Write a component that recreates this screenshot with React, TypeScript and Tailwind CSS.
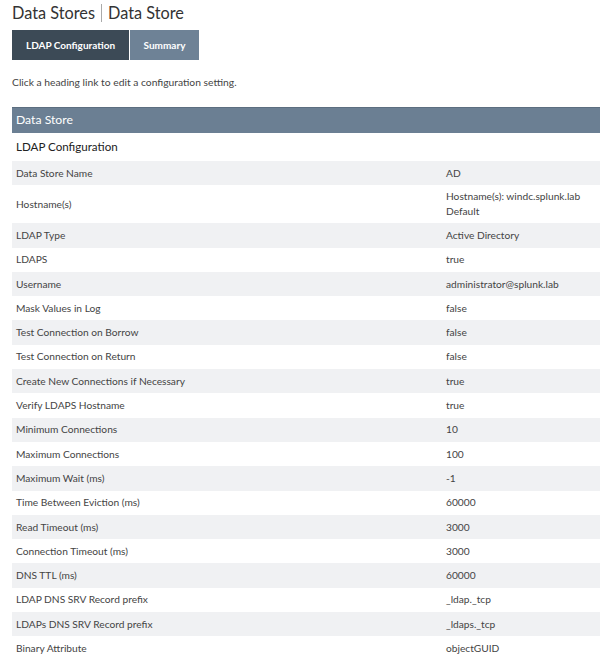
import React from "react";

const rows: [string, string[]][] = [
  ["Data Store Name", ["AD"]],
  ["Hostname(s)", ["Hostname(s): windc.splunk.lab", "Default"]],
  ["LDAP Type", ["Active Directory"]],
  ["LDAPS", ["true"]],
  ["Username", ["administrator@splunk.lab"]],
  ["Mask Values in Log", ["false"]],
  ["Test Connection on Borrow", ["false"]],
  ["Test Connection on Return", ["false"]],
  ["Create New Connections if Necessary", ["true"]],
  ["Verify LDAPS Hostname", ["true"]],
  ["Minimum Connections", ["10"]],
  ["Maximum Connections", ["100"]],
  ["Maximum Wait (ms)", ["-1"]],
  ["Time Between Eviction (ms)", ["60000"]],
  ["Read Timeout (ms)", ["3000"]],
  ["Connection Timeout (ms)", ["3000"]],
  ["DNS TTL (ms)", ["60000"]],
  ["LDAP DNS SRV Record prefix", ["_ldap._tcp"]],
  ["LDAPs DNS SRV Record prefix", ["_ldaps._tcp"]],
  ["Binary Attribute", ["objectGUID"]],
];

export default function App() {
  return (
    <div
      className="w-[600px] h-[670px] overflow-hidden bg-white text-[#333]"
      style={{ fontFamily: "Lato, 'Open Sans', sans-serif" }}
    >
      <div className="pl-[12px]">
        <h1 className="h-[30px] text-[16.3px] leading-[22px] text-[#333] flex items-center gap-[6px] font-normal pb-[4px]">
          <span>Data Stores</span>
          <span className="w-px h-[18px] bg-[#aaa]" />
          <span>Data Store</span>
        </h1>
        <div className="flex gap-px h-[30px]">
          <div className="w-[117px] bg-[#3c4a56] text-white text-[10px] font-bold flex items-center justify-center">
            LDAP Configuration
          </div>
          <div className="w-[69px] bg-[#6e8296] text-white text-[10px] font-bold flex items-center justify-center">
            Summary
          </div>
        </div>
        <p className="mt-[15px] text-[10.3px] leading-[14px] text-[#444]">
          Click a heading link to edit a configuration setting.
        </p>
        <div className="mt-[18px]">
          <div className="h-[26px] bg-[#6b7f93] border-t border-[#5c6e80] text-white text-[12.2px] flex items-center pl-[4px]">
            Data Store
          </div>
          <div className="h-[28px] text-[11.6px] text-[#222] flex items-center pl-[4px]">
            LDAP Configuration
          </div>
          {rows.map(([label, vals], i) => (
            <div
              key={label}
              className={`flex text-[10.2px] leading-[15px] text-[#444] ${
                i % 2 === 0 ? "bg-[#f0f1f3]" : "bg-white"
              } ${vals.length > 1 ? "h-[38px]" : "h-[24.3px]"}`}
            >
              <div className="w-[434px] pl-[4px] flex items-center">{label}</div>
              <div className="flex-1 flex flex-col justify-center">
                {vals.map((v) => (
                  <div key={v}>{v}</div>
                ))}
              </div>
            </div>
          ))}
        </div>
      </div>
    </div>
  );
}
